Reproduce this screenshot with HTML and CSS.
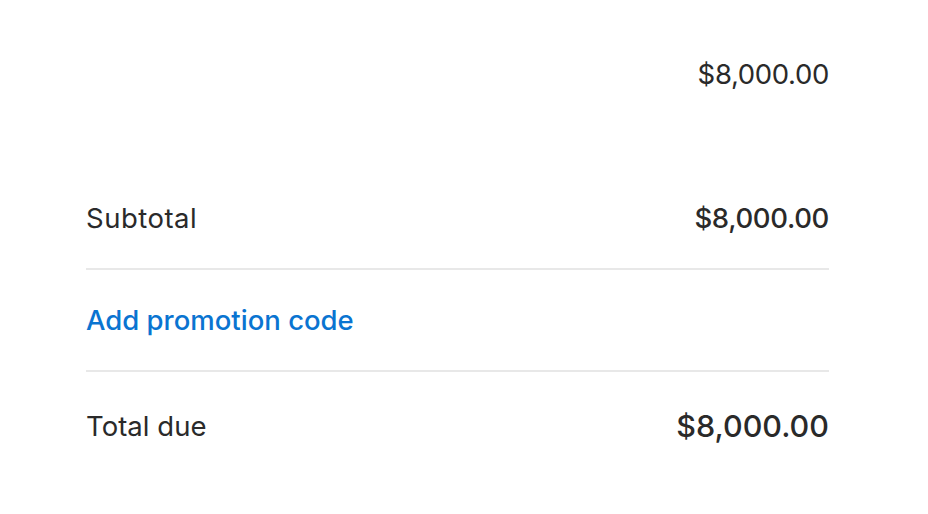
FILE: index.html
```html
<!DOCTYPE html>
<html>
<head>
<meta charset="utf-8">
<link rel="stylesheet" href="styles.css">
</head>
<body>
<div class="summary">
  <div class="row top"><span></span><span class="amount">$8,000.00</span></div>
  <div class="row sub divided"><span class="label">Subtotal</span><span class="amount strong">$8,000.00</span></div>
  <div class="row promo divided"><a class="link" href="#">Add promotion code</a></div>
  <div class="row total"><span class="label label-total">Total due</span><span class="amount big">$8,000.00</span></div>
</div>
</body>
</html>
```
FILE: styles.css
```css
html, body { margin: 0; padding: 0; background: #fff; }
body {
  font-family: Inter, "Noto Sans", "Liberation Sans", sans-serif;
  color: #1f1f1f;
  -webkit-font-smoothing: antialiased;
}
.summary {
  width: 743px;
  margin-left: 86px;
}
.row {
  display: flex;
  justify-content: space-between;
  align-items: center;
  font-size: 27.5px;
  line-height: 36px;
}
.top { padding-top: 56px; }
.sub { margin-top: 76px; padding: 32px 0; }
.divided { border-bottom: 2px solid #e8e8e8; }
.promo { padding: 32px 0; }
.total { padding-top: 34px; line-height: 40px; }
.amount { color: #2a2a2a; letter-spacing: -0.35px; }
.strong { font-weight: 500; }
.big { font-size: 30.5px; font-weight: 500; letter-spacing: 0; }
.label { color: #2a2a2a; letter-spacing: 0.5px; }
.label-total { letter-spacing: 0.05px; }
.link { color: #0a74d1; text-decoration: none; font-weight: 500; letter-spacing: 0; }
```
